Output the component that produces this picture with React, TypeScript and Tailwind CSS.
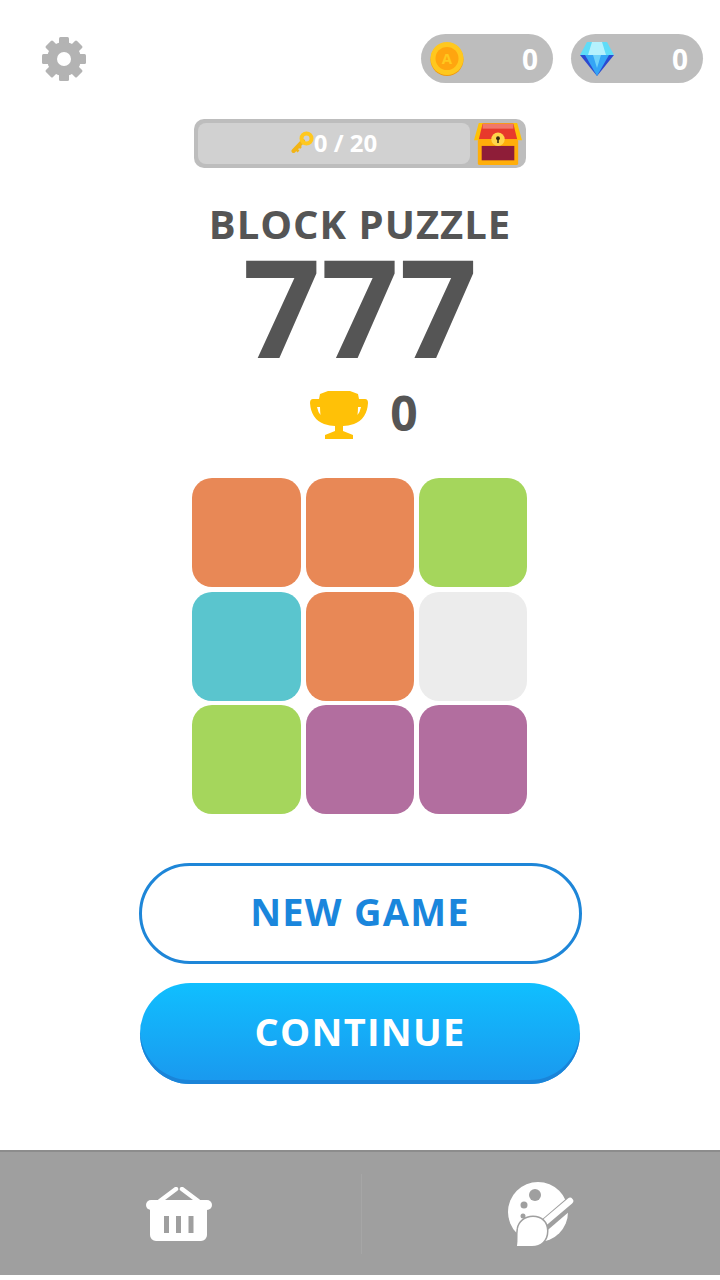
const cells = [
  "bg-[#e88856]", "bg-[#e88856]", "bg-[#a5d65c]",
  "bg-[#5ac5ce]", "bg-[#e88856]", "bg-[#ececec]",
  "bg-[#a5d65c]", "bg-[#b26e9f]", "bg-[#b26e9f]",
];

const Gear = () => (
  <svg width="44" height="44" viewBox="0 0 44 44">
    {[0, 45, 90, 135].map((a) => (
      <rect key={a} x="17" y="0" width="10" height="44" rx="1.500" fill="#b3b3b3" transform={`rotate(${a} 22 22)`} />
    ))}
    <circle cx="22" cy="22" r="17" fill="#b3b3b3" />
    <circle cx="22" cy="22" r="7" fill="#fff" />
  </svg>
);

const Coin = () => (
  <svg width="34" height="34" viewBox="0 0 34 34">
    <circle cx="17" cy="17.500" r="16.500" fill="#f09a10" />
    <circle cx="17" cy="16.500" r="16.500" fill="#ffc81e" />
    <circle cx="17" cy="16.500" r="11.500" fill="#ffa50f" />
    <text x="17" y="22" textAnchor="middle" fontSize="15" fontWeight="700" fill="#ffc81e" fontFamily="'Open Sans', sans-serif">A</text>
  </svg>
);

const Diamond = () => (
  <svg width="34" height="34" viewBox="0 0 34 34">
    <polygon points="7,0 27,0 34,13 0,13" fill="#5fdcf8" />
    <polygon points="12,0 22,0 26,13 8,13" fill="#b5f1fd" />
    <polygon points="0,13 34,13 17,34" fill="#2b49d0" />
    <polygon points="5,13 29,13 17,34" fill="#35a5f5" />
    <polygon points="13,13 21,13 17,26" fill="#6fd2fa" />
  </svg>
);

const Key = () => (
  <svg width="23" height="23" viewBox="0 0 23 23">
    <path d="M2.500 20 12 10" stroke="#f2b416" strokeWidth="4" strokeLinecap="round" />
    <path d="M5 18l2.500 2.500M8 15l2 2" stroke="#f2b416" strokeWidth="2.500" />
    <circle cx="15.500" cy="7.500" r="5" fill="none" stroke="#ffc81e" strokeWidth="4" />
  </svg>
);

const Chest = () => (
  <svg width="48" height="44" viewBox="0 0 50 44">
    <polygon points="5,0 45,0 50,18 0,18" fill="#ffc107" />
    <polygon points="9,1 41,1 45,17 5,17" fill="#e8392b" />
    <rect x="9" y="1" width="32" height="5" fill="#f0786a" />
    <rect x="4" y="17" width="42" height="27" rx="2" fill="#ffae0a" />
    <rect x="8" y="24" width="34" height="15" fill="#8e1d38" />
    <circle cx="25" cy="17" r="7" fill="#ffd54a" />
    <circle cx="25" cy="16" r="2" fill="#3a2a10" />
    <rect x="24.200" y="16" width="1.600" height="5" fill="#3a2a10" />
  </svg>
);

const Trophy = () => (
  <svg width="58" height="48" viewBox="0 0 58 48">
    <path
      fill="#ffc107"
      fillRule="evenodd"
      d="M10 3 18 0H40L48 3 49 8H55Q58 8 58 12 57 28 44 33 38 35 33 35V40L43 44V48H15V44L25 40V35Q20 35 14 33 1 28 0 12 0 8 3 8H9ZM7 16Q8 21 10.500 24 10 19 10 16ZM51 16 48 16Q48 19 47.500 24 50 21 51 16Z"
    />
  </svg>
);

const Basket = () => (
  <svg width="66" height="55" viewBox="0 0 66 55">
    <path d="M14 14 30 2M52 14 36 2" stroke="#fff" strokeWidth="4.500" strokeLinecap="round" fill="none" />
    <rect x="0" y="13" width="66" height="10" rx="5" fill="#fff" />
    <path
      fill="#fff"
      fillRule="evenodd"
      d="M4 22h57v26a6 6 0 0 1-6 6H10a6 6 0 0 1-6-6zM18 29v17h5V29zM30 29v17h5V29zM42.500 29v17h5V29z"
    />
  </svg>
);

const Palette = () => (
  <svg width="66" height="65" viewBox="0 0 66 65">
    <circle cx="30" cy="30" r="30" fill="#fff" />
    <circle cx="27" cy="13" r="6" fill="#9f9f9f" />
    <circle cx="16" cy="23" r="3.500" fill="#9f9f9f" />
    <circle cx="15" cy="34" r="2.500" fill="#9f9f9f" />
    <path d="M33 46 68 16" stroke="#9f9f9f" strokeWidth="12" />
    <path d="M36 41 62 19" stroke="#fff" strokeWidth="6.500" strokeLinecap="round" />
    <path
      fill="#fff"
      stroke="#9f9f9f"
      strokeWidth="3"
      paintOrder="stroke"
      d="M9 64h15c9 0 15-6 15-15s-6-14-14-14-14 5-15 12c-1 6 0 11-1 17z"
    />
  </svg>
);

const CurrencyPill = ({ icon }: { icon: React.ReactNode }) => (
  <div className="w-[132px] h-[49px] rounded-full bg-[#bdbdbd] flex items-center justify-between pl-[9px] pr-[15px]">
    {icon}
    <span className="text-[28px] font-bold text-white">0</span>
  </div>
);

export default function App() {
  return (
    <div className="w-[720px] h-[1280px] bg-white flex flex-col items-center font-['Open_Sans',sans-serif] overflow-hidden">
      {/* Top bar */}
      <header className="w-full h-[49px] mt-[34px] pl-[42px] pr-[17px] flex items-center justify-between">
        <Gear />
        <div className="flex gap-[18px]">
          <CurrencyPill icon={<Coin />} />
          <CurrencyPill icon={<Diamond />} />
        </div>
      </header>

      {/* Key progress */}
      <div className="w-[332px] h-[49px] mt-[36px] p-1 rounded-[10px] bg-[#bdbdbd] flex items-center">
        <div className="w-[272px] shrink-0 h-[41px] pb-[2px] rounded-lg bg-[#d1d1d1] flex items-center justify-center text-[24px] font-bold text-white">
          <Key />
          <span>0 / 20</span>
        </div>
        <div className="ml-[4px] shrink-0">
          <Chest />
        </div>
      </div>

      {/* Title and score */}
      <h1 className="mt-[30px] h-[52px] leading-[52px] text-[40px] font-bold text-[#555555] tracking-[1px]">BLOCK PUZZLE</h1>
      <div className="h-[125px] leading-[110px] text-[137px] font-bold text-[#555555]">777</div>
      <div className="mt-[15px] h-[50px] flex items-center gap-[22px] pl-[8px]">
        <Trophy />
        <span className="text-[48px] font-bold text-[#555555] pb-[4px]">0</span>
      </div>

      {/* Board */}
      <div className="mt-[38px] mr-[1px] grid grid-cols-[109px_108px_108px] grid-rows-[109px_109px_109px] gap-x-[5px] gap-y-[4.500px]">
        {cells.map((c, i) => (
          <div key={i} className={`rounded-[20px] ${c}`} />
        ))}
      </div>

      {/* Buttons */}
      <button className="mt-[49px] w-[443px] h-[101px] pb-[4px] rounded-full border-[3px] border-[#1e86d8] bg-white text-[38px] font-bold text-[#1a86dc] tracking-[1.25px]">
        NEW GAME
      </button>
      <button className="mt-[19px] w-[440px] h-[101px] pb-[4px] rounded-full bg-gradient-to-b from-[#10bfff] to-[#1a98ee] shadow-[inset_0_-4px_0_#1a84d8] text-[38px] font-bold text-white tracking-[1.25px]">
        CONTINUE
      </button>

      {/* Bottom nav */}
      <nav className="mt-[66px] w-full h-[125px] pt-[1px] bg-[#9f9f9f] border-t-2 border-[#8c8c8c] flex items-center">
        <div className="flex-1 flex justify-center pr-[2px]">
          <Basket />
        </div>
        <div className="w-px h-[80px] bg-[#a6a6a6]" />
        <div className="flex-1 flex justify-center">
          <Palette />
        </div>
      </nav>
    </div>
  );
}
